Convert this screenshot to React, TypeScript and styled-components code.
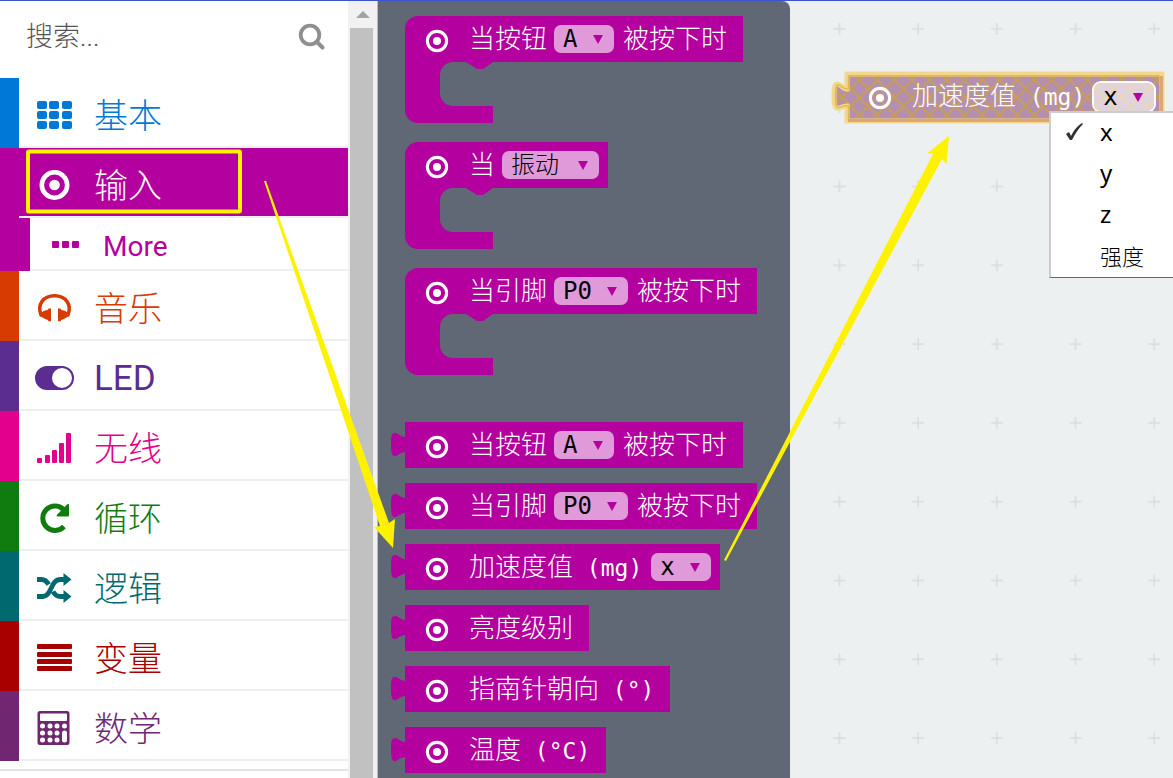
import React from 'react';
import styled, { createGlobalStyle } from 'styled-components';

const CJK = '"Noto Sans CJK SC"';
const UI = `Roboto, ${CJK}, sans-serif`;
const CODE = `"DejaVu Sans Mono", ${CJK}, monospace`;
const PURPLE = '#b4009e';
const SLATE = '#616875';

const GlobalStyle = createGlobalStyle`
  * { box-sizing: border-box; }
  body { margin: 0; background: #ecf0f1; font-family: ${UI}; }
  button, input, select { font: inherit; }
`;

const Editor = styled.div`
  position: relative;
  display: flex;
  height: 100vh;
  overflow: hidden;
  border-top: 1px solid #3a55cc;
`;

/* ---------- toolbox ---------- */
const Toolbox = styled.nav`
  flex: 0 0 348px;
  background: #fff;
  overflow: hidden;
`;
const Search = styled.label`
  display: flex;
  align-items: center;
  height: 77px;
  padding: 0 22px 6px 26px;
  color: #8f8f8f;
`;
const SearchInput = styled.input`
  flex: 1;
  min-width: 0;
  border: 0;
  padding: 0;
  outline: 0;
  background: none;
  font-size: 27px;
  font-weight: 300;
  color: #555;
  &::placeholder { color: #555; opacity: 1; }
`;
const Category = styled.button<{ $color: string; $active?: boolean }>`
  display: flex;
  align-items: center;
  width: 100%;
  height: 70px;
  padding: 4px 0 0 16px;
  border: 0;
  border-left: 19px solid ${p => p.$color};
  box-shadow: inset 0 -2px #ecf0f1;
  background: ${p => (p.$active ? p.$color : '#fff')};
  color: ${p => (p.$active ? '#fff' : p.$color)};
  font-size: 34px;
  font-weight: 300;
  line-height: 48px;
  text-align: left;
`;
const CategoryIcon = styled.span`
  display: flex;
  flex: 0 0 59px;
`;
const CategoryName = styled.span<{ $latin?: boolean }>`
  padding-top: 2px;
  font-size: ${p => (p.$latin ? 35 : 34)}px;
  font-weight: ${p => (p.$latin ? 400 : 300)};
`;
const SubCategory = styled(Category)`
  height: 53px;
  border-left-width: 30px;
  padding: 5px 0 0 18px;
  font-size: 28px;
  font-weight: 400;
`;
const SubIcon = styled.span`
  display: flex;
  flex: 0 0 55px;
  padding-bottom: 4px;
`;
const Divider = styled.hr`
  margin: 8px 0 0;
  border: 0;
  height: 2px;
  background: #e4e4e4;
`;

/* ---------- scrollbar ---------- */
const Scrollbar = styled.div`
  flex: 0 0 30px;
  display: flex;
  flex-direction: column;
  background: #f1f1f1;
  border-right: 1px solid #b8bcc0;
`;
const ScrollUp = styled.div`
  display: flex;
  align-items: center;
  justify-content: center;
  height: 27px;
`;
const Thumb = styled.div`
  flex: 1;
  margin: 0 4px 0 2px;
  background: #c1c1c1;
`;

/* ---------- flyout ---------- */
const Flyout = styled.section`
  flex: 0 0 412px;
  padding: 15px 0 0 27px;
  background: ${SLATE};
  border-top-right-radius: 8px;
  overflow: hidden;
`;
const Stack = styled.div<{ $gap: number }>`
  display: flex;
  flex-direction: column;
  align-items: flex-start;
  gap: ${p => p.$gap}px;
  & + & { margin-top: 47px; }
`;
const HatBlock = styled.div`
  display: flex;
  flex-direction: column;
  align-items: flex-start;
`;
const BlockBar = styled.div<{ $hat?: boolean }>`
  position: relative;
  display: flex;
  align-items: center;
  height: 46px;
  padding: 0 9px 0 20px;
  background: ${PURPLE};
  border-top-left-radius: ${p => (p.$hat ? 13 : 0)}px;
  color: #fff;
  font-family: ${CODE};
  font-size: 26px;
  font-weight: 300;
  line-height: 36px;
  white-space: pre;
`;
const BlockIcon = styled.span`
  display: flex;
  width: 44px;
  padding-top: 3px;
`;
const BlockText = styled.span<{ $code?: boolean }>`
  margin-right: ${p => (p.$code ? 9 : 7)}px;
`;
const Code = styled.span`
  font-size: 23px;
`;
const Arm = styled.div`
  width: 88px;
  height: 61px;
  padding-left: 35px;
  background: ${PURPLE};
  border-bottom-left-radius: 13px;
`;
const Mouth = styled.div`
  height: 44px;
  padding-left: 26px;
  background: ${SLATE};
  border-radius: 13px 0 0 13px;
`;
const Plug = styled.svg`
  position: absolute;
  left: -14px;
  top: 10px;
`;
const Field = styled.span<{ $w: number }>`
  position: relative;
  display: flex;
  width: ${p => p.$w}px;
  margin-right: 9px;
  &:last-child { margin-right: 0; }
`;
const Select = styled.select<{ $open?: boolean }>`
  appearance: none;
  width: 100%;
  height: 28px;
  padding: 0 0 0 9px;
  border: 0;
  border-radius: 7px;
  outline: 0;
  background: ${p => (p.$open ? 'rgba(255,255,255,.6)' : '#e19ad9')};
  box-shadow: ${p => (p.$open ? '0 0 0 2px #fff' : 'none')};
  color: #000;
  font-size: 24px;
  font-weight: 300;
  line-height: 28px;
`;
const Caret = styled.svg`
  position: absolute;
  right: 11px;
  top: 10px;
  pointer-events: none;
`;

/* ---------- workspace ---------- */
const Workspace = styled.main`
  position: relative;
  flex: 1;
  min-width: 0;
  overflow: hidden;
  background: #ecf0f1;
`;
const Grid = styled.svg`
  position: absolute;
  inset: 0;
  width: 100%;
  height: 100%;
`;
const Placed = styled.div`
  position: absolute;
  left: 57px;
  top: 71px;
`;
const GhostBar = styled(BlockBar)`
  height: 49px;
  padding-left: 21px;
  background: none;
`;
const GhostShape = styled.svg`
  position: absolute;
  left: -16px;
  top: -1px;
`;
const Menu = styled.ul`
  position: absolute;
  left: 259px;
  top: 110px;
  width: 160px;
  margin: 0;
  padding: 0;
  list-style: none;
  background: #fff;
  border: 2px solid #ccc;
  border-bottom: 1px solid #666;
  color: #000;
`;
const MenuItem = styled.li`
  display: flex;
  align-items: center;
  height: 41px;
  padding-bottom: 4px;
  font-family: "Noto Sans", ${CJK}, sans-serif;
  font-size: 22px;
  font-weight: 300;
`;
const MenuLetter = styled.span`
  font-size: 24px;
  font-weight: 400;
`;
const Tick = styled.span`
  display: flex;
  flex: 0 0 49px;
  padding-left: 15px;
`;

/* ---------- annotations ---------- */
const Marks = styled.svg`
  position: absolute;
  left: 0;
  top: -1px;
  pointer-events: none;
`;

const Target = () => (
  <svg width="24" height="24" viewBox="0 0 24 24" fill="none">
    <circle cx="12" cy="12" r="9.6" stroke="#fff" strokeWidth="3.1" />
    <circle cx="12" cy="12" r="4" fill="#fff" />
  </svg>
);

const icons: Record<string, React.ReactNode> = {
  grid: (
    <svg width="40" height="28" fill="currentColor">
      {[0, 10, 20].map(y => [2, 14, 27].map(x => <rect key={`${x}-${y}`} x={x} y={y} width="10" height="8" rx="2" />))}
    </svg>
  ),
  target: (
    <svg width="40" height="32" viewBox="0 0 40 32" fill="none" stroke="currentColor">
      <circle cx="19.5" cy="16" r="12.7" strokeWidth="4.6" />
      <circle cx="19.5" cy="16" r="5.3" fill="currentColor" stroke="none" />
    </svg>
  ),
  headphones: (
    <svg width="40" height="28" viewBox="0 0 40 28" fill="none">
      <path d="M6 21C2 11 8 2 19.5 2S37 11 33 21" transform="translate(0 -.2)" stroke="currentColor" strokeWidth="3.6" strokeLinecap="round" />
      <path d="M16 14.5v12.8h-2.400l-.8-1.400C9 25 6 22.500 5 21.500c.5-3 4-5.500 7.600-5.600l1-1.400zM23 14.500v12.800h2.400l.8-1.400c3.800-.9 6.800-3.400 7.800-4.400-.5-3-4-5.500-7.600-5.600l-1-1.400z" fill="currentColor" />
    </svg>
  ),
  toggle: (
    <svg width="40" height="26" viewBox="0 0 40 26" fill="currentColor">
      <path fillRule="evenodd" d="M12 1h15a12 12 0 0 1 0 24H12a12 12 0 0 1 0-24zm15 2a10 10 0 1 0 0 20a10 10 0 0 0 0-20z" />
    </svg>
  ),
  signal: (
    <svg width="40" height="30" fill="currentColor">
      <rect x="2" y="25" width="5" height="5" rx="1" />
      <rect x="10" y="22" width="5" height="8" rx="1" />
      <rect x="17" y="17" width="5" height="13" rx="1" />
      <rect x="24" y="10" width="5" height="20" rx="1" />
      <rect x="31" y="0" width="5" height="30" rx="1" />
    </svg>
  ),
  loop: (
    <svg width="40" height="30" viewBox="0 0 40 30" fill="none">
      <path d="M28.5 6.500A12.200 12.200 0 1 0 29 23.500" stroke="currentColor" strokeWidth="5" />
      <path d="M34 2v10.500c0 .6-.5 1-1 1H22.800c-1 0-1.500-1-.8-1.800L32.300 1.300c.7-.7 1.700-.2 1.700.7z" fill="currentColor" />
    </svg>
  ),
  shuffle: (
    <svg width="40" height="30" viewBox="0 0 40 30" fill="none">
      <path d="M2 6.500h4.500c3.500 0 5.500 2 7.200 5M30 6.500h-4.500C15 6.500 17.500 23.500 7 23.500H2M18 18.500c1.500 3 3.500 5 7.500 5H30" stroke="currentColor" strokeWidth="4.8" />
      <path d="M28.500 0l8 6.500-8 6.500zM28.500 17l8 6.500-8 6.500z" fill="currentColor" />
    </svg>
  ),
  lines: (
    <svg width="40" height="28" fill="currentColor">
      {[0, 8, 15, 22].map(y => <rect key={y} x="2" y={y} width="35" height="5" rx="1" />)}
    </svg>
  ),
  calc: (
    <svg width="40" height="34" viewBox="0 0 40 34">
      <rect x="2.500" width="32" height="34" rx="2.500" fill="currentColor" />
      <rect x="5" y="2.500" width="27" height="7.500" rx="1" fill="#fff" />
      {[15, 22, 29].map(y => [7.5, 15, 22].map(x => <circle key={`${x}-${y}`} cx={x} cy={y} r="2.500" fill="#fff" />))}
      <circle cx="29.500" cy="15" r="2.500" fill="#fff" />
      <rect x="27" y="19.500" width="5" height="12" rx="2.500" fill="#fff" />
    </svg>
  ),
};

type Cat = { name: string; icon: string; color: string; latin?: boolean };
const categories: Cat[] = [
  { name: '音乐', icon: 'headphones', color: '#d83b01' },
  { name: 'LED', icon: 'toggle', color: '#5c2d91', latin: true },
  { name: '无线', icon: 'signal', color: '#e3008c' },
  { name: '循环', icon: 'loop', color: '#107c10' },
  { name: '逻辑', icon: 'shuffle', color: '#006970' },
  { name: '变量', icon: 'lines', color: '#a80000' },
  { name: '数学', icon: 'calc', color: '#712672' },
];

const CategoryRow = ({ name, icon, color, latin, active }: Cat & { active?: boolean }) => (
  <Category type="button" $color={color} $active={active}>
    <CategoryIcon>{icons[icon]}</CategoryIcon>
    <CategoryName $latin={latin}>{name}</CategoryName>
  </Category>
);

const Dropdown = ({ value, label, width, open }: { value: string; label: string; width: number; open?: boolean }) => (
  <Field $w={width}>
    <Select aria-label={label} $open={open} defaultValue={value}>
      <option>{value}</option>
    </Select>
    <Caret width="10" height="9"><path d="M0 0h10L5 9z" fill={PURPLE} /></Caret>
  </Field>
);

const PlugShape = () => (
  <Plug width="14" height="26" viewBox="0 0 14 26">
    <path d="M14 5C9 5 6 0 3 1C0 2 0 7 0 12s0 11 3 12c3 1 6-4 11-4z" fill={PURPLE} />
  </Plug>
);

type Part = { before: string; code?: string; after?: string; value?: string; width?: number };

const Parts = ({ before, code, after, value, width = 60, open }: Part & { open?: boolean }) => (
  <>
    <BlockIcon><Target /></BlockIcon>
    <BlockText $code={!!code && !!value}>{before}{code && <Code>{code}</Code>}</BlockText>
    {value && <Dropdown value={value} label={before} width={width} open={open} />}
    {after && <BlockText>{after}</BlockText>}
  </>
);

const hats: Part[] = [
  { before: '当按钮', value: 'A', after: '被按下时' },
  { before: '当', value: '振动', width: 97 },
  { before: '当引脚', value: 'P0', width: 74, after: '被按下时' },
];
const reporters: Part[] = [
  { before: '当按钮', value: 'A', after: '被按下时' },
  { before: '当引脚', value: 'P0', width: 74, after: '被按下时' },
  { before: '加速度值', code: ' (mg)', value: 'x' },
  { before: '亮度级别' },
  { before: '指南针朝向', code: ' (°)' },
  { before: '温度', code: ' (°C)' },
];

const GHOST = 'M16 3H331V50H16V35C11 35 9 38 6 37C3 36 3 31 3 25S3 14 6 13C9 12 11 18 16 18z';

export default function App() {
  return (
    <Editor>
      <GlobalStyle />
      <Toolbox>
        <Search>
          <SearchInput type="text" placeholder="搜索..." aria-label="搜索" />
          <svg width="28" height="28" viewBox="0 0 28 28" fill="none" stroke="currentColor">
            <circle cx="12" cy="12" r="9.300" strokeWidth="3.800" />
            <path d="M19 19l5.500 5.500" strokeWidth="4" strokeLinecap="round" />
          </svg>
        </Search>
        <CategoryRow name="基本" icon="grid" color="#0078d7" />
        <CategoryRow name="输入" icon="target" color={PURPLE} active />
        <SubCategory type="button" $color={PURPLE}>
          <SubIcon>
            <svg width="34" height="8" fill="currentColor">
              <rect x="4" width="7" height="7" rx="1" />
              <rect x="14" width="7" height="7" rx="1" />
              <rect x="24" width="7" height="7" rx="1" />
            </svg>
          </SubIcon>
          More
        </SubCategory>
        {categories.map(c => <CategoryRow key={c.name} {...c} />)}
        <Divider />
      </Toolbox>
      <Scrollbar>
        <ScrollUp><svg width="14" height="7"><path d="M0 7h14L7 0z" fill="#a3a3a3" /></svg></ScrollUp>
        <Thumb />
      </Scrollbar>
      <Flyout>
        <Stack $gap={19}>
          {hats.map((h, i) => (
            <HatBlock key={i}>
              <BlockBar $hat><Parts {...h} /></BlockBar>
              <Arm>
                <Mouth>
                  <svg width="27" height="7" viewBox="0 0 27 7" display="block"><path d="M0 0h27l-10 7h-6z" fill={PURPLE} /></svg>
                </Mouth>
              </Arm>
            </HatBlock>
          ))}
        </Stack>
        <Stack $gap={15}>
          {reporters.map((r, i) => (
            <BlockBar key={i}><PlugShape /><Parts {...r} /></BlockBar>
          ))}
        </Stack>
      </Flyout>
      <Workspace>
        <Grid>
          <defs>
            <pattern id="plus" width="78.700" height="78.800" patternUnits="userSpaceOnUse" x="9.500" y="-12">
              <path d="M34 40h12M40 34v12" stroke="#d8dce0" strokeWidth="1.500" />
            </pattern>
          </defs>
          <rect width="100%" height="100%" fill="url(#plus)" />
        </Grid>
        <Placed>
          <GhostShape width="336" height="53" viewBox="0 0 336 53">
            <defs>
              <pattern id="hatch" width="17.500" height="17.500" patternUnits="userSpaceOnUse" x="2">
                <path d="M-1 -1l20 20M19 -1L-1 19" stroke="#c9a048" strokeWidth="1.800" />
              </pattern>
            </defs>
            <path d={GHOST} fill="#b48fb0" />
            <path d={GHOST} fill="url(#hatch)" stroke="#f2d88a" strokeWidth="5" />
            <path d="M17 49.500H330.500V5" fill="none" stroke="#e0a672" strokeWidth="3" />
            <path d="M17.500 48V35C11 34 9 38 6 36C4 34 4 16 6 14C9 12 11 19 17.500 18V4.800H329" fill="none" stroke="#e2b850" strokeWidth="1.500" />
          </GhostShape>
          <GhostBar><Parts before="加速度值" code=" (mg)" value="x" open /></GhostBar>
        </Placed>
        <Menu role="listbox" aria-label="加速度值">
          {['x', 'y', 'z', '强度'].map((t, i) => (
            <MenuItem key={t} role="option" aria-selected={i === 0}>
              <Tick>
                {i === 0 && (
                  <svg width="17" height="18" viewBox="0 0 17 18"><path d="M0 11l3-2 2 4C8 7 11 3 16 0l1 1C12 6 9 11 6 17H4z" fill="#333" /></svg>
                )}
              </Tick>
              {t.length === 1 ? <MenuLetter>{t}</MenuLetter> : t}
            </MenuItem>
          ))}
        </Menu>
      </Workspace>
      <Marks width="1173" height="778" viewBox="0 0 1173 778">
        <rect x="28" y="151.500" width="212" height="60" rx="1" fill="none" stroke="#fff200" strokeWidth="4" />
        <path d="M264 181h2L389 523l6-4-2 29-19-21 6-1z" fill="#fff200" />
        <path d="M724 560L933 154l-6-.5L949 136l-2.500 28-4.500-5L726 561z" fill="#fff200" />
      </Marks>
    </Editor>
  );
}
